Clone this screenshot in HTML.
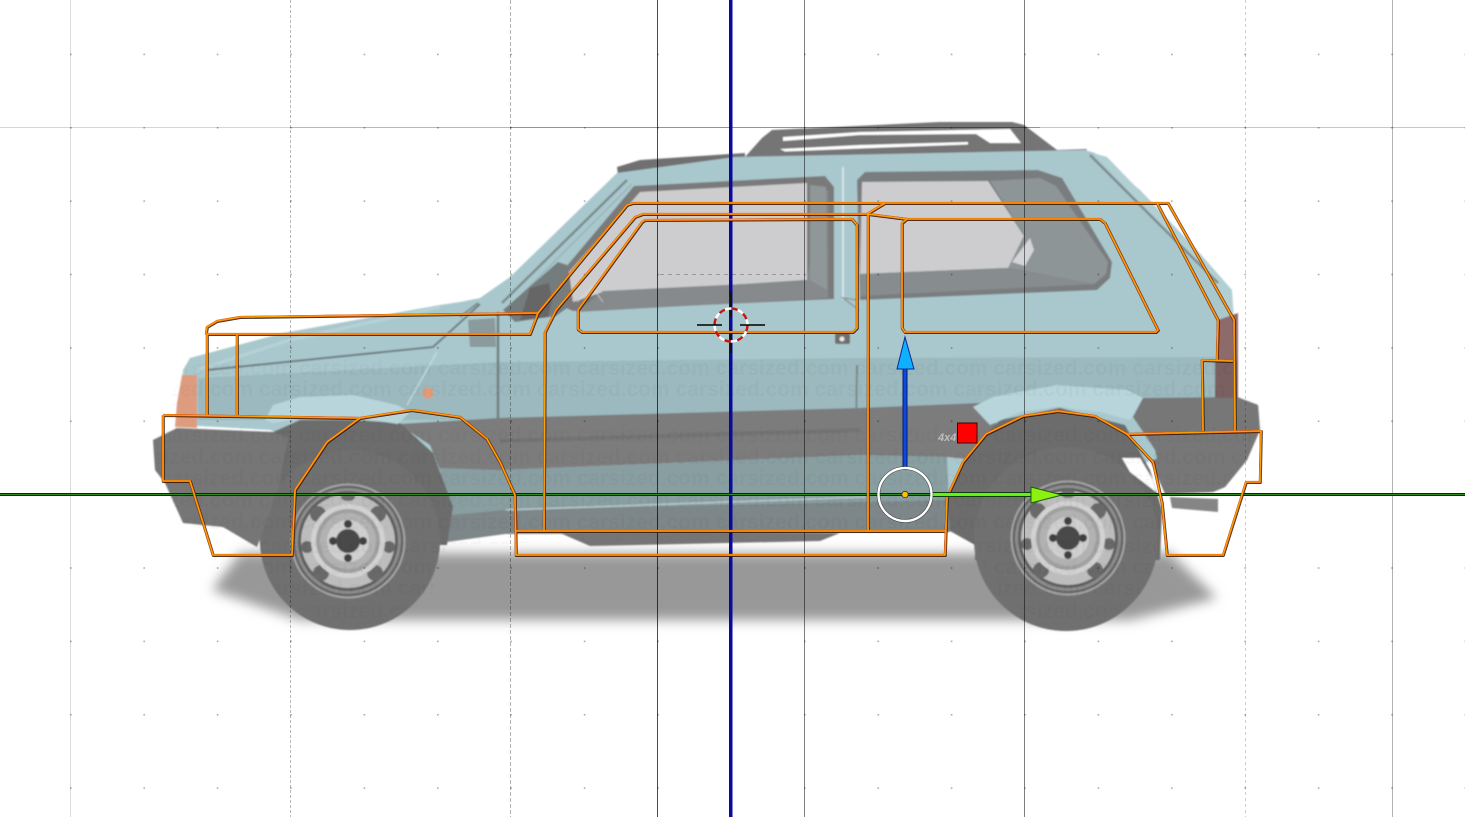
<!DOCTYPE html>
<html><head><meta charset="utf-8"><style>html,body{margin:0;padding:0;background:#fff;overflow:hidden;width:1465px;height:817px}svg{display:block}</style></head><body>
<svg width="1465" height="817" viewBox="0 0 1465 817" xmlns="http://www.w3.org/2000/svg">
<defs>
<filter id="b6" x="-10%" y="-30%" width="120%" height="160%"><feGaussianBlur stdDeviation="6"/></filter>
<filter id="b1"><feGaussianBlur stdDeviation=".7"/></filter>
<pattern id="dots" x="70" y="127" width="73.4" height="73.37" patternUnits="userSpaceOnUse"><rect width="1.6" height="1.6" fill="#000" opacity=".33"/></pattern>
<clipPath id="car"><path d="M153,440L183,370 283,333 480,300 617,172 1085,150 1233,310 1238,400 1258,403 1260,425 1222,488 1160,500 1160,540 1140,600 1066,630 1000,600 975,545 950,532 447,545 430,600 350,630 280,600 257,547 183,523 155,470Z"/></clipPath>
<g id="rim">
<circle r="57.5" fill="#a6a6a6"/><circle r="55.5" fill="#646464"/><circle r="53" fill="#8d8d8d"/><circle r="50" fill="#5f5f5f"/>
<circle r="47" fill="#bdbdbd"/>
<circle cx="30" cy="-27" r="8" fill="#696969"/><circle cx="41" cy="6" r="6" fill="#696969"/><circle cx="27" cy="32" r="8" fill="#696969"/><circle cx="-27" cy="32" r="8" fill="#696969"/><circle cx="-30" cy="-27" r="8" fill="#696969"/><circle cx="-41" cy="6" r="6" fill="#696969"/>
<ellipse cx="0" cy="-44" rx="7" ry="4" fill="#6c6c6c"/>
<circle r="37" fill="#d2d2d2"/><circle r="32" fill="#a0a0a0"/><circle r="28" fill="#b2b2b2"/><circle r="21" fill="#cfcfcf"/>
<circle cx="0" cy="-17" r="4" fill="#3f3f3f"/><circle cx="15" cy="0" r="4" fill="#3f3f3f"/><circle cx="0" cy="17" r="4" fill="#3f3f3f"/><circle cx="-15" cy="0" r="4" fill="#3f3f3f"/>
<circle r="12" fill="#4a4a4a"/>
</g>
<path id="w" d="M207,415L207,334 530,334 538,313 240,317 217,321 207,327 206,334M237,335L237,415M163,415L360,418M163,415L163,481 190,481 213,555 292,555 295,490 327,442 360,418 412,410 460,417 487,439 500,462 515,495 516,555 945,555 947,497 963,462 986,434 1023,416 1058,411 1095,416 1127,434 1153,462 1162,503 1167,555 1223,555 1246,482 1260,482 1261,431 1127,434M1203,431L1202,360 1233,361M1235,431L1234,320 1168,203 885,203 867,214M1217,360L1218,320 1157,203M885,203L633,203 627,205 538,313M868,214L643,214 635,217 556,310 545,332 544,531M868,214L868,531M516,531L946,531M868,214L907,219 1100,219 1105,223 1158,330 1156,332 905,332 902,328 902,223 907,219M645,220L642,222 578,310 578,329 582,332 853,332 857,328 857,225 852,219 645,220Z" fill="none" stroke-linejoin="round"/>
</defs>
<rect width="1465" height="817" fill="#fff"/>

<!-- shadow -->
<path d="M240,553L1170,553 1217,598 1130,620 300,620 212,590Z" fill="#989898" filter="url(#b6)"/>

<g filter="url(#b1)">
<!-- roof rails -->
<path d="M745,157L762,138 772,130 940,122 1012,122 1024,125 1057,150 1087,149 1083,155 745,158Z" fill="#757575"/>
<path d="M783,137L860,132 1010,129 1021,143 990,143 976,134 860,135 783,141Z" fill="#fff"/>
<path d="M780,149L860,145 968,142 968,144.500 860,148.500 785,151.500Z" fill="#fff"/>
<path d="M617,167L640,160 745,153 745,159 618,175Z" fill="#707070"/>

<!-- tires -->
<circle cx="350" cy="540" r="90" fill="#6f6f6f"/>
<circle cx="1066" cy="539" r="92" fill="#6f6f6f"/>

<!-- rear bumper -->
<path d="M1143,398L1237,397 1258,405 1260,430 1247,460 1225,487 1213,492 1165,494 1150,460 1128,420Z" fill="#777"/>
<path d="M1170,497L1218,499 1218,512 1172,508Z" fill="#858585"/>

<!-- main body -->
<path d="M183,370L190,358 283,333 440,305 460,302 480,298 510,277 617,173 735,157 1085,150 1095,153 1140,190 1197,250 1225,285 1233,310 1238,400 1238,430 950,532 505,532 270,430 180,425Z" fill="#a9c8cd"/>
<!-- rear gate light edge -->
<path d="M1093,153L1107,157 1197,250 1232,290 1234,320 1224,300 1215,284Z" fill="#b2cfd4"/>
<path d="M1090,155L1218,283" stroke="#7d8a8d" stroke-width="2.500" fill="none"/>
<!-- lower band -->
<path d="M198,378L500,362 858,358 1215,357 1215,405 500,420 198,420Z" fill="#9bb9be"/>
<path d="M207,370L433,347 465,318 480,304" stroke="#6f7d80" stroke-width="2" fill="none"/>
<path d="M197,370L290,340 440,307" stroke="#b5d2d7" stroke-width="3" fill="none"/>
<path d="M460,317L478,303" stroke="#7d8a8d" stroke-width="2" fill="none"/>
<!-- A pillar lines -->
<path d="M502,303L627,180" stroke="#7a8a8d" stroke-width="2.500" fill="none"/>
<path d="M509,307L632,184" stroke="#98b4b9" stroke-width="1.500" fill="none"/>
<!-- windshield -->
<path d="M503,310L558,262 567,265 567,308 556,316 515,322Z" fill="#747b7d"/>
<path d="M530,288L549,283 552,300 548,317 520,320Z" fill="#666"/>
<!-- front window -->
<path d="M565,268L634,186 825,176 834,187 834,299 573,311 566,308Z" fill="#7a7a7a"/>
<path d="M569,272L640,192 807,183 807,280 600,293 573,302Z" fill="#cdcdcf"/>
<path d="M577,312L603,291 807,281 820,190 828,190 828,298Z" fill="#868a8c"/>
<path d="M810,185L826,187 827,290 810,280Z" fill="#8f9799"/>
<path d="M577,302L592,287 603,302" stroke="#e4e4e4" stroke-width="1" fill="none" opacity=".6"/>
<path d="M843,167L843,300" stroke="#dfeef1" stroke-width="1.500" fill="none"/>
<path d="M859,310L843,298 858,300" stroke="#8c9a9d" stroke-width="1.500" fill="none"/>
<!-- rear window -->
<path d="M857,180L865,172 1038,170 1062,178 1112,262 1110,278 1097,290 860,300Z" fill="#7a7d7f"/>
<path d="M990,181L1040,178 1056,186 1108,262 1106,274 1094,284 1008,268 1025,236Z" fill="#8e9597"/>
<path d="M862,182L988,181 1024,236 1008,268 860,274Z" fill="#cdcdcf"/>
<path d="M860,274L1005,268 1095,284 860,296Z" fill="#878c8e"/>
<path d="M1012,262L1030,238 1034,250 1025,266Z" fill="#d4d4d6"/>
<!-- door handle -->
<rect x="835" y="333" width="15" height="11" rx="2" fill="#6e6e6e"/><circle cx="842" cy="339" r="2.500" fill="#e8e8e8"/>
<!-- indicator -->
<circle cx="428" cy="393" r="5.500" fill="#e09a75"/>
<path d="M437,352L407,405" stroke="#c6dfe3" stroke-width="1.200" fill="none"/>
<path d="M468,320L495,318 496,347 470,347Z" fill="#8a9a9d"/>
<path d="M498,312L498,505" stroke="#737d80" stroke-width="2.500" fill="none"/>
<path d="M857,365L855,505" stroke="#7d8a8c" stroke-width="2" fill="none"/>
<!-- dark side strip -->
<path d="M398,424L500,418 860,408 980,403 1000,416 975,460 947,457 860,455 500,470 440,470 430,445Z" fill="#7b7b7b"/>
<path d="M500,441L860,430" stroke="#717171" stroke-width="4" opacity=".7" fill="none"/>
<!-- lower panel -->
<path d="M440,468L500,470 860,455 947,457 950,532 505,534 450,540Z" fill="#889ea1"/>
<path d="M505,510L950,500 950,532 505,534 447,542 452,515Z" fill="#7d8688"/>
<path d="M506,510L866,497" stroke="#c6d6d8" stroke-width="1.500" opacity=".8" fill="none"/>
<path d="M560,533L840,533 820,541 590,546Z" fill="#757575"/>
<!-- front arch -->
<path d="M273,432L300,420 353,420 400,423 433,453 453,507 447,545 260,545 257,490Z" fill="#6c6c6c"/>
<circle cx="350" cy="540" r="90" fill="#6f6f6f"/>
<path d="M265,420L273,405 300,397 353,395 397,405 410,412 398,424 357,418 307,417 273,423Z" fill="#b7d5da"/>
<!-- front lamp -->
<path d="M182,375L197,375 197,428 175,427 177,403Z" fill="#dd9c7f"/>
<!-- front bumper -->
<path d="M153,440L177,428 273,432 288,438 278,490 257,547 223,527 183,523 165,483 155,470Z" fill="#767676"/>
<!-- rear arch -->
<path d="M947,500L963,462 986,434 1000,420 1060,408 1125,425 1150,470 1162,510 1160,560 975,560 975,545 950,531Z" fill="#6c6c6c"/>
<circle cx="1066" cy="539" r="92" fill="#6f6f6f"/>
<path d="M973,407L993,397 1057,385 1127,390 1143,398 1130,420 1100,412 1058,407 1020,412 990,425Z" fill="#b7d5da"/>
<!-- rear bumper top again -->
<path d="M1143,398L1237,397 1258,405 1260,430 1247,460 1225,487 1213,492 1165,494 1155,450 1133,417Z" fill="#777"/>
<path d="M1122,458L1140,458 1153,480 1156,492 1130,472Z" fill="#fff"/>
<!-- tail light -->
<path d="M1218,320L1238,313 1238,398 1215,398Z" fill="#8e6a6a"/>
<path d="M1215,360L1238,360 1238,398 1215,398Z" fill="#7a6060"/>
<!-- rims -->
<use href="#rim" transform="translate(348,541)"/>
<use href="#rim" transform="translate(1068,538)"/>
</g>

<!-- watermark -->
<g clip-path="url(#car)" font-family="'Liberation Sans',sans-serif" font-size="21" font-weight="700" fill="#000" fill-opacity=".022">
<text x="160" y="375">carsized.com carsized.com carsized.com carsized.com carsized.com carsized.com carsized.com carsized.com</text>
<text x="120" y="396">carsized.com carsized.com carsized.com carsized.com carsized.com carsized.com carsized.com carsized.com carsized.com</text>
<text x="160" y="442">carsized.com carsized.com carsized.com carsized.com carsized.com carsized.com carsized.com carsized.com</text>
<text x="120" y="464">carsized.com carsized.com carsized.com carsized.com carsized.com carsized.com carsized.com carsized.com carsized.com</text>
<text x="160" y="485">carsized.com carsized.com carsized.com carsized.com carsized.com carsized.com carsized.com carsized.com</text>
<text x="120" y="507">carsized.com carsized.com carsized.com carsized.com carsized.com carsized.com carsized.com carsized.com carsized.com</text>
<text x="160" y="529">carsized.com carsized.com carsized.com carsized.com carsized.com carsized.com carsized.com carsized.com</text>
<text x="120" y="553">carsized.com carsized.com carsized.com carsized.com carsized.com carsized.com carsized.com carsized.com carsized.com</text>
<text x="160" y="574">carsized.com carsized.com carsized.com carsized.com carsized.com carsized.com carsized.com carsized.com</text>
<text x="120" y="595">carsized.com carsized.com carsized.com carsized.com carsized.com carsized.com carsized.com carsized.com carsized.com</text>
<text x="160" y="618">carsized.com carsized.com carsized.com carsized.com carsized.com carsized.com carsized.com carsized.com</text>
</g>
<text x="938" y="441" font-family="'Liberation Sans',sans-serif" font-size="11" font-weight="700" font-style="italic" fill="#bdbdbd">4x4</text>

<!-- grid -->
<rect width="1465" height="817" fill="url(#dots)"/>
<g fill="none" stroke="#000">
<path d="M0,127.500H290" stroke-opacity=".16"/>
<path d="M290,127.500H510" stroke-opacity=".28"/>
<path d="M510,127.500H1040" stroke-opacity=".42"/>
<path d="M1040,127.500H1465" stroke-opacity=".22"/>
<path d="M70.500,0V817" stroke-opacity=".14"/>
<path d="M290.500,0V817" stroke-opacity=".28" stroke-dasharray="3 2"/>
<path d="M510.500,0V817" stroke-opacity=".3" stroke-dasharray="4 2"/>
<path d="M657.500,0V817" stroke-opacity=".7"/>
<path d="M804.500,0V817" stroke-opacity=".5"/>
<path d="M1024.500,0V817" stroke-opacity=".5"/>
<path d="M1245.500,0V817" stroke-opacity=".2" stroke-dasharray="3 3"/>
<path d="M1392.500,0V817" stroke-opacity=".3"/>
<path d="M660,274.500H800" stroke-opacity=".25" stroke-dasharray="4 4"/>
</g>

<!-- Z axis -->
<rect x="729" y="0" width="3.500" height="817" fill="#0a0a9c"/>
<rect x="730" y="291" width="2" height="26" fill="#111"/>
<rect x="730" y="330" width="2" height="23" fill="#111"/>
<!-- Y axis -->
<rect x="0" y="493" width="1465" height="3" fill="#0c2c08"/>
<rect x="0" y="494" width="1465" height="1" fill="#2f8a1c"/>

<!-- outlines -->
<use href="#w" stroke="#1a0a00" stroke-width="3" stroke-opacity=".85" transform="translate(.3,.5)"/>
<use href="#w" stroke="#ee6a0c" stroke-width="2.200"/>
<use href="#w" stroke="#ffb000" stroke-width=".8"/>

<!-- 3D cursor -->
<circle cx="731" cy="325" r="16.500" fill="none" stroke="#fff" stroke-width="2.500"/>
<circle cx="731" cy="325" r="16.500" fill="none" stroke="#c01818" stroke-width="2.500" stroke-dasharray="6.500 6.500"/>
<path d="M697,325H722M740,325H765" stroke="#000" stroke-width="1.600"/>

<!-- gizmo -->
<rect x="902.500" y="368" width="5" height="102" fill="#0a1a70"/>
<rect x="903.500" y="368" width="3" height="102" fill="#0a4ae0"/>
<path d="M905,337L897,369H914Z" fill="#10b0ff" stroke="#0a2a90" stroke-width="1"/>
<rect x="932" y="492" width="100" height="5" fill="#0c3c08"/>
<rect x="932" y="493" width="100" height="3" fill="#66f018"/>
<path d="M1031,487L1062,495 1031,503Z" fill="#8cf010" stroke="#1a5c0a" stroke-width="1"/>
<circle cx="905" cy="494.500" r="26.500" fill="none" stroke="#222" stroke-width="3.500" stroke-opacity=".7"/>
<circle cx="905" cy="494.500" r="26.500" fill="none" stroke="#fff" stroke-width="2.400"/>
<circle cx="905" cy="494.500" r="3.200" fill="#ffc000" stroke="#333" stroke-width=".8"/>
<!-- red square -->
<rect x="957.500" y="423" width="19.500" height="20" fill="#ff0000" stroke="#400" stroke-width="1"/>
</svg>
</body></html>
